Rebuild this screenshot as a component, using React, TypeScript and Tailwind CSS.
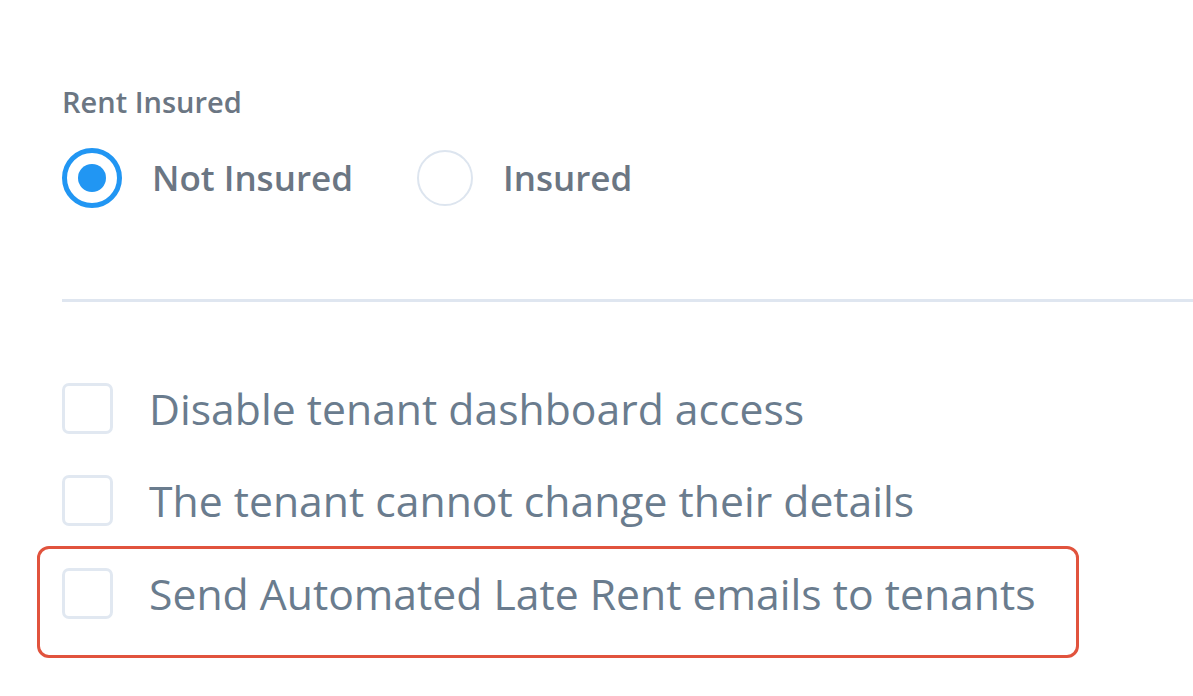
import React from "react"

const font = { fontFamily: "'Open Sans', 'Noto Sans', sans-serif" }

function Radio({ checked, label }: { checked?: boolean; label: string }) {
  return (
    <label className="flex items-center gap-[30px]">
      {checked ? (
        <span className="flex h-[60px] w-[60px] items-center justify-center rounded-full border-[5px] border-[#2196f3]">
          <span className="h-[28px] w-[28px] rounded-full bg-[#2196f3]" />
        </span>
      ) : (
        <span className="h-[56px] w-[56px] rounded-full border-2 border-[#dde5ef]" />
      )}
      <span className="text-[35px] font-semibold leading-[52px] text-[#6b7683]">{label}</span>
    </label>
  )
}

function Check({ label }: { label: string }) {
  return (
    <div className="flex items-center gap-[36px]">
      <span className="h-[51px] w-[51px] shrink-0 rounded-[7px] border-[3px] border-[#e1e8f1]" />
      <span className="text-[42.7px] leading-[51px] text-[#6a7c8e]">{label}</span>
    </div>
  )
}

export default function App() {
  return (
    <div className="h-[696px] w-[1193px] overflow-hidden bg-white" style={font}>
      <div className="pl-[62px] pt-[80px]">
        <div className="text-[29px] font-semibold leading-[44px] text-[#6b7683]">Rent Insured</div>
        <div className="mt-[24px] flex items-center gap-[64px]">
          <Radio checked label="Not Insured" />
          <Radio label="Insured" />
        </div>
        <div className="mt-[91px] h-[3px] bg-[#dfe6f0]" />
        <div className="mt-[81px] flex flex-col gap-[41px]">
          <Check label="Disable tenant dashboard access" />
          <Check label="The tenant cannot change their details" />
        </div>
      </div>
      <div className="ml-[37px] mt-[20px] w-[1042px] rounded-[12px] border-[3px] border-[#e1533d] pb-[36px] pl-[22px] pt-[19px]">
        <Check label="Send Automated Late Rent emails to tenants" />
      </div>
    </div>
  )
}
